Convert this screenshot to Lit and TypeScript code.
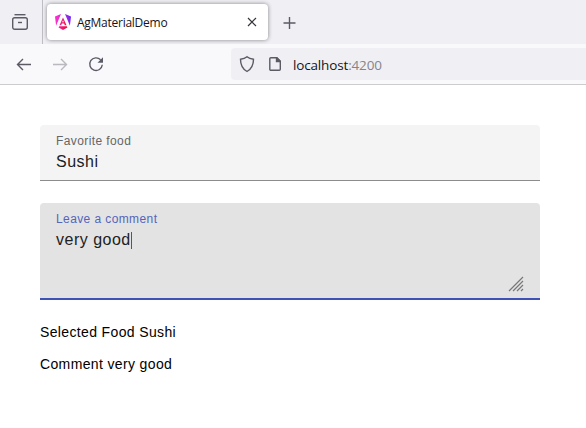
import { LitElement, html, css } from "lit";
import { customElement, property, state } from "lit/decorators.js";

@customElement("browser-chrome")
class BrowserChrome extends LitElement {
  @property() tabTitle = "";
  @property() host = "";
  @property() port = "";

  static styles = css`
    :host { display: block; font-family: "Open Sans", "Noto Sans", sans-serif; color: #15141a; }
    svg { display: block; fill: none; stroke: #5b5b66; stroke-width: 1.4; flex: none; }
    .tabs { display: flex; height: 44px; background: #f0eff4; box-sizing: border-box; }
    .view { width: 31px; border-right: 1px solid #bdbdc3; padding: 13px 0 0 11px; }
    .tab { display: flex; align-items: center; margin: 4px 0 0 4px; width: 221px; height: 36px; box-sizing: border-box;
      padding: 0 8px 0 7px; background: #fff; border-radius: 4px; box-shadow: 0 0 4px rgba(0, 0, 0, 0.45); }
    .title { flex: 1; margin-left: 5px; padding-top: 1px; font-size: 12px; letter-spacing: -0.26px; white-space: nowrap; }
    .new { margin: 14px 0 0 12px; }
    .bar { display: flex; align-items: center; height: 40px; background: #f9f9fb; border-bottom: 1px solid #cccccf; padding-left: 15px; }
    .back { margin-right: 18px; }
    .forward { margin-right: 18px; opacity: 0.4; }
    .address { display: flex; align-items: center; flex: 1; height: 32px; margin-left: 126px; padding-left: 7px;
      background: #f0f0f4; border-radius: 4px 0 0 4px; }
    .page { margin-left: 10px; }
    .url { margin-left: 9px; padding-top: 2px; font-size: 13.5px; letter-spacing: -0.16px; }
    .port { color: #84848c; }
    .solid { fill: #5b5b66; stroke: none; }
    .dark { stroke: #35343c; stroke-width: 1.2; }
    .logo { stroke: none; }
  `;

  render() {
    return html`
      <div class="tabs">
        <div class="view">
          <svg width="18" height="18" viewBox="0 0 18 18"><path d="M3.500 1.700h11" /><rect x="1.700" y="4.700" width="14.600" height="11.600" rx="2" /><path d="M7 9.500h4" /></svg>
        </div>
        <div class="tab">
          <svg class="logo" width="18" height="18" viewBox="0 0 18 18">
            <defs>
              <linearGradient id="g" gradientUnits="userSpaceOnUse" x1="1" y1="10" x2="17" y2="5"><stop offset="0" stop-color="#ff32c5" /><stop offset=".5" stop-color="#e52bd7" /><stop offset="1" stop-color="#6426f2" /></linearGradient>
              <linearGradient id="h" x1="0" x2="1"><stop offset="0" stop-color="#f0249c" /><stop offset="1" stop-color="#f0083c" /></linearGradient>
            </defs>
            <path fill="url(#g)" d="M1 3.600 7 1 2.100 12.700zM11 1l6 2.600-1.100 9.100z" />
            <path fill="url(#h)" d="M9 4.400l3.500 7.800H10.800L10.100 10.600H7.900L7.200 12.200H5.500zM9 7.200 8.100 9.300H9.900z" />
            <path fill="url(#h)" d="M5.200 13.200h7.600l.6 1.400L9 17l-4.400-2.400z" />
          </svg>
          <span class="title">${this.tabTitle}</span>
          <svg class="dark" width="16" height="16" viewBox="0 0 16 16"><path d="M4 4l8 8M12 4l-8 8" /></svg>
        </div>
        <svg class="new" width="18" height="18" viewBox="0 0 18 18"><path d="M9.500 3v12M3.500 9h12" /></svg>
      </div>
      <div class="bar">
        <svg class="back" width="18" height="18" viewBox="0 0 18 18"><path d="M16 9.500H2.500M8 4 2.500 9.500 8 15" /></svg>
        <svg class="forward" width="18" height="18" viewBox="0 0 18 18"><path d="M2 9.500h13.500M10 4l5.500 5.500L10 15" /></svg>
        <svg width="18" height="18" viewBox="0 0 18 18"><path d="M13.600 4.800A6.300 6.300 0 1 0 15.300 9.800" /><path class="solid" d="M16 2.200v5.500h-5.500z" /></svg>
        <div class="address">
          <svg width="18" height="18" viewBox="0 0 18 18"><path d="M9 1.700c-2 1.600-4.200 2.200-6.500 2.600 0 6 1.800 9.700 6.500 12.200 4.700-2.500 6.500-6.200 6.500-12.200C13.200 3.900 11 3.300 9 1.700z" /></svg>
          <svg class="page" width="18" height="18" viewBox="0 0 18 18"><path d="M4.800 2.700h6l3.500 3.500v8.100a1 1 0 0 1-1 1H4.800a1 1 0 0 1-1-1V3.700a1 1 0 0 1 1-1z" /><path class="solid" d="M9.800 2.200h1.500L15 6v1.200H9.800z" /></svg>
          <span class="url">${this.host}<span class="port">:${this.port}</span></span>
        </div>
      </div>
    `;
  }
}

@customElement("filled-field")
class FilledField extends LitElement {
  @property() label = "";
  @property() value = "";
  @property({ type: Boolean, reflect: true }) active = false;

  static styles = css`
    :host { display: block; box-sizing: border-box; height: 56px; padding: 9px 16px 0; background: #f4f4f4;
      border-bottom: 1px solid #8c8c8c; border-radius: 4px 4px 0 0; position: relative; }
    :host([active]) { height: 97px; background: #e3e3e3; border-bottom: 2px solid #3f51b5; }
    .label { font-size: 12px; line-height: 15px; letter-spacing: 0.4px; color: #666; }
    :host([active]) .label { color: #5664bb; }
    .value { display: flex; align-items: center; font-size: 16px; line-height: 26px; letter-spacing: 0.5px; color: #212121; white-space: pre; }
    .caret { width: 1px; height: 17px; background: #3f51b5; }
    .grip { position: absolute; right: 16px; bottom: 6px; fill: none; stroke: #777; stroke-width: 1.2; }
  `;

  render() {
    return html`
      <div class="label">${this.label}</div>
      <div class="value"><span>${this.value}</span>${this.active ? html`<span class="caret"></span>` : ""}</div>
      ${this.active
        ? html`<svg class="grip" width="16" height="16" viewBox="0 0 16 16"><path d="M1 15 15 1M5 15 15 5M9 15l6-6M13 15l2-2" /></svg>`
        : ""}
    `;
  }
}

@customElement("app-root")
class AppRoot extends LitElement {
  @state() private food = "Sushi";
  @state() private comment = "very good";

  static styles = css`
    :host { display: block; height: 428px; overflow: hidden; background: #fff; font-family: "Liberation Sans", Arial, sans-serif; }
    main { display: flex; flex-direction: column; gap: 22px; width: 500px; padding: 40px 0 0 40px; }
    .summary { display: flex; flex-direction: column; gap: 12px; font-size: 14px; line-height: 20px; letter-spacing: 0.36px; color: #000; }
  `;

  render() {
    return html`
      <browser-chrome tabTitle="AgMaterialDemo" host="localhost" port="4200"></browser-chrome>
      <main>
        <filled-field label="Favorite food" value=${this.food}></filled-field>
        <filled-field label="Leave a comment" value=${this.comment} active></filled-field>
        <div class="summary">
          <div>Selected Food ${this.food}</div>
          <div>Comment ${this.comment}</div>
        </div>
      </main>
    `;
  }
}
